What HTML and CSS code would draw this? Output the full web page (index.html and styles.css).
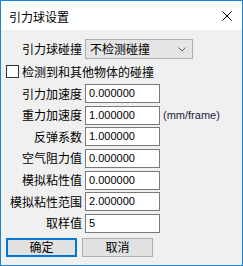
FILE: index.html
```html
<!DOCTYPE html>
<html lang="zh-CN">
<head>
    <meta charset="UTF-8">
    <title>引力球设置</title>
    <link rel="stylesheet" href="styles.css">
</head>
<body>
    <div class="dialog">
        <!-- Title bar -->
        <div class="titlebar">
            <span class="title">引力球设置</span>
            <svg class="close" width="10" height="10" viewBox="0 0 10 10">
                <path d="M0.5 0.5 L9.5 9.5 M9.5 0.5 L0.5 9.5" stroke="#000" stroke-width="1" fill="none"/>
            </svg>
        </div>

        <div class="content">
            <div class="row combo-row">
                <span class="lbl">引力球碰撞</span>
                <div class="combo">
                    <span>不检测碰撞</span>
                    <svg class="chevron" width="8" height="5" viewBox="0 0 8 5">
                        <path d="M0.5 0.5 L4 4 L7.5 0.5" stroke="#606060" stroke-width="1" fill="none"/>
                    </svg>
                </div>
            </div>

            <label class="check-row">
                <span class="box"></span>
                <span>检测到和其他物体的碰撞</span>
            </label>

            <div class="fields">
                <span class="lbl">引力加速度</span>
                <div class="field">0.000000</div>
                <span></span>

                <span class="lbl">重力加速度</span>
                <div class="field">1.000000</div>
                <span class="unit">(mm/frame)</span>

                <span class="lbl">反弹系数</span>
                <div class="field">1.000000</div>
                <span></span>

                <span class="lbl">空气阻力值</span>
                <div class="field">0.000000</div>
                <span></span>

                <span class="lbl">模拟粘性值</span>
                <div class="field">0.000000</div>
                <span></span>

                <span class="lbl">模拟粘性范围</span>
                <div class="field">2.000000</div>
                <span></span>

                <span class="lbl">取样值</span>
                <div class="field">5</div>
                <span></span>
            </div>

            <div class="buttons">
                <button class="btn default">确定</button>
                <button class="btn">取消</button>
            </div>
        </div>
    </div>
</body>
</html>
```

FILE: styles.css
```css
/* Win10 style dialog */
body {
    margin: 0;
    font-family: "Noto Sans CJK SC", "Liberation Sans", sans-serif;
    font-size: 12px;
    color: #000;
}

.dialog {
    width: 241px;
    height: 264px;
    border: 1px solid #1883d7;
    background-color: #f0f0f0;
}

.titlebar {
    height: 29px;
    background-color: #fff;
    display: flex;
    align-items: center;
    justify-content: space-between;
    padding: 0 10px 0 8px;
}

.title {
    line-height: 12px;
    margin-top: 2px;
}

.close {
    display: block;
    margin-top: 1px;
}

.content {
    display: flex;
    flex-direction: column;
}

.lbl {
    text-align: right;
    line-height: 12px;
    white-space: nowrap;
}

.combo-row {
    display: grid;
    grid-template-columns: 81px 108px;
    column-gap: 3px;
    align-items: center;
    margin-top: 9px;
    height: 20px;
}

.combo {
    height: 18px;
    border: 1px solid #adadad;
    background-color: #e5e5e5;
    display: flex;
    align-items: center;
    justify-content: space-between;
    padding: 0 6px 0 4px;
    line-height: 12px;
}

.check-row {
    display: flex;
    align-items: center;
    gap: 3px;
    margin-top: 5px;
    height: 15px;
    padding-left: 5px;
}

.box {
    width: 11px;
    height: 11px;
    border: 1px solid #333;
    background-color: #fff;
}

.fields {
    display: grid;
    grid-template-columns: 81px 75px auto;
    grid-auto-rows: 19px;
    column-gap: 3px;
    row-gap: 2.67px;
    align-items: center;
    margin-top: 5px;
}

.field {
    height: 17px;
    border: 1px solid #7a7a7a;
    background-color: #fff;
    font-family: "Liberation Sans", sans-serif;
    font-size: 11px;
    line-height: 17px;
    padding-left: 3px;
}

.unit {
    font-family: "Liberation Sans", sans-serif;
    font-size: 11px;
    color: #1a1a40;
}

.buttons {
    display: flex;
    gap: 5px;
    margin-top: 5px;
    padding-left: 5px;
}

.btn {
    width: 71px;
    height: 19px;
    margin: 0;
    padding: 0;
    border: 1px solid #adadad;
    background-color: #e1e1e1;
    font-family: "Noto Sans CJK SC", sans-serif;
    font-size: 12px;
    line-height: 12px;
    color: #000;
}

.btn.default {
    border: 2px solid #0078d7;
}
```
